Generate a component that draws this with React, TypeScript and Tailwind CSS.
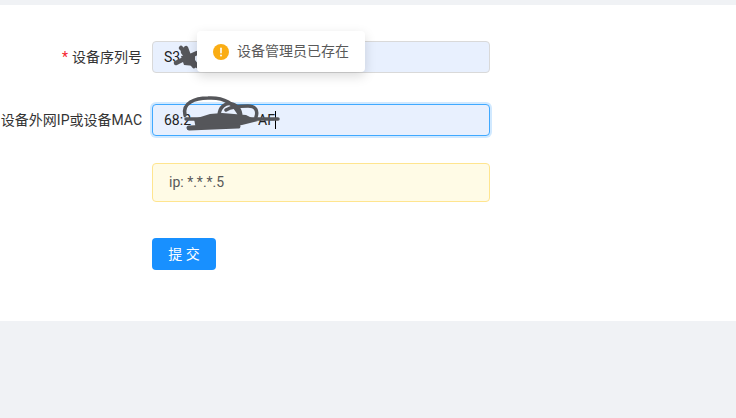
import React from "react";

const font = "font-['Roboto','Noto_Sans_CJK_SC',sans-serif]";

function FormRow({ label, required, children }: { label: string; required?: boolean; children: React.ReactNode }) {
  return (
    <div className="flex items-center">
      <label className="w-[142px] shrink-0 whitespace-nowrap text-right text-[14px] text-[#333]">
        {required && <span className="mr-1 text-[#f5222d]">*</span>}
        {label}
      </label>
      <div className="ml-[10px] w-[338px]">{children}</div>
    </div>
  );
}

function Scribble1() {
  return (
    <svg className="absolute left-[172px] top-[43px] h-[30px] w-[34px]" viewBox="0 0 34 30" fill="none">
      <path d="M9 5 L17 13 L24 22 L30 26" stroke="#55565a" strokeWidth="4.5" strokeLinecap="round" />
      <path d="M14 5 L18 16 M4 20 L14 15 L25 10 M11 9 L22 23" stroke="#55565a" strokeWidth="4.5" strokeLinecap="round" />
      <path d="M9 13 L23 11 L23 23 L12 22 Z" fill="#55565a" />
    </svg>
  );
}

function Scribble2() {
  return (
    <svg className="absolute left-[180px] top-[95px] h-[42px] w-[104px]" viewBox="0 0 104 42" fill="none">
      <path d="M5 20 C2 8 15 3 28 3 C44 2 55 9 60 21" stroke="#55565a" strokeWidth="3.5" strokeLinecap="round" />
      <path d="M39 21 C39 12 46 7 52 9 C59 11 62 18 60 23" stroke="#55565a" strokeWidth="3.5" strokeLinecap="round" />
      <path d="M46 15 C52 11 60 11 68 11 C76 11 78 16 76 22" stroke="#55565a" strokeWidth="3.5" strokeLinecap="round" />
      <path d="M6 24 L98 24" stroke="#55565a" strokeWidth="3.5" strokeLinecap="round" />
      <path d="M14 24 L30 19 L42 18 L66 20 L78 26 L62 30 L40 33 L16 34 Z" fill="#55565a" />
      <path d="M9 33 L58 31" stroke="#55565a" strokeWidth="5" strokeLinecap="round" />
    </svg>
  );
}

export default function App() {
  return (
    <div className={`relative h-[418px] w-[736px] overflow-hidden bg-[#f0f2f5] pt-[5px] ${font}`}>
      <div className="h-[316px] bg-white pt-[36px]">
        <FormRow label="设备序列号" required>
          <div className="flex h-[32px] items-center rounded border border-[#d9d9d9] bg-[#e8f0fe] px-[11px] text-[14px] text-[#222]">
            S3
          </div>
        </FormRow>
        <div className="mt-[31px]">
          <FormRow label="设备外网IP或设备MAC">
            <div className="flex h-[32px] items-center rounded border border-[#40a9ff] bg-[#e8f0fe] px-[11px] text-[14px] text-[#222] shadow-[0_0_0_2px_rgba(24,144,255,0.2)]">
              68:2
              <span className="ml-[67px] text-[#222]">AF</span>
              <span className="h-[18px] w-px bg-black" />
            </div>
          </FormRow>
        </div>
        <div className="ml-[152px] mt-[27px] flex h-[39px] w-[338px] items-center rounded border border-[#ffe58f] bg-[#fffbe6] px-[16px] text-[14px] text-[#595959]">
          ip: *.*.*.5
        </div>
        <button className="ml-[152px] mt-[36px] block h-[32px] w-[64px] rounded bg-[#1890ff] text-[14px] text-white">
          提 交
        </button>
      </div>

      <Scribble1 />
      <Scribble2 />

      <div className="absolute left-[197px] top-[31px] flex h-[41px] w-[168px] items-center rounded bg-white pl-[16px] text-[14px] text-[#595959] shadow-[0_4px_12px_rgba(0,0,0,0.15)]">
        <svg className="mr-[8px] h-[16px] w-[16px]" viewBox="0 0 16 16">
          <circle cx="8" cy="8" r="8" fill="#faad14" />
          <rect x="7.2" y="3.5" width="1.6" height="6" rx="0.8" fill="#fff" />
          <circle cx="8" cy="11.6" r="1" fill="#fff" />
        </svg>
        设备管理员已存在
      </div>
    </div>
  );
}
